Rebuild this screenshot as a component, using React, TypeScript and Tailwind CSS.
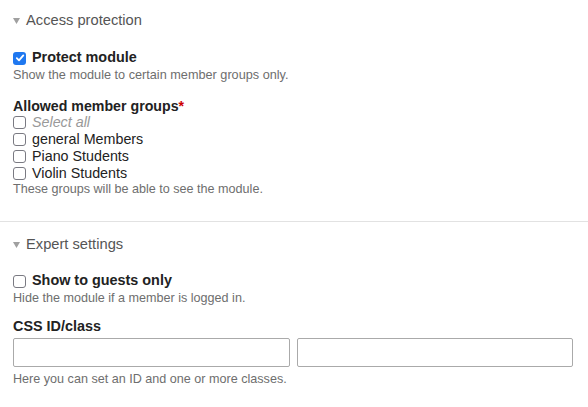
import React from "react";

function Tri() {
  return (
    <svg width="7" height="6" viewBox="0 0 7 6" className="mr-[6px] mt-[1px]">
      <polygon points="0,0 7,0 3.5,6" fill="#a0a0a0" />
    </svg>
  );
}

function Box({ checked }: { checked?: boolean }) {
  if (checked) {
    return (
      <span className="w-[13px] h-[13px] rounded-[3px] bg-[#1f78f0] flex items-center justify-center shrink-0 mr-[6px]">
        <svg width="10" height="10" viewBox="0 0 10 10">
          <polyline points="1.8,5.2 4,7.4 8.3,2.4" fill="none" stroke="#fff" strokeWidth="1.8" strokeLinecap="round" strokeLinejoin="round" />
        </svg>
      </span>
    );
  }
  return <span className="w-[13px] h-[13px] rounded-[3px] border border-[#7a7a82] bg-white shrink-0 mr-[6px]" />;
}

export default function App() {
  return (
    <div className="w-[588px] h-[407px] bg-white text-[#222] overflow-hidden" style={{ fontFamily: '"Liberation Sans", Arial, sans-serif' }}>
      <section className="pt-[10px] px-[13px] border-b border-[#e2e2e2] h-[222px]">
        <div className="h-[20px] flex items-center text-[14.7px] text-[#555]">
          <Tri />
          <span>Access protection</span>
        </div>
        <div className="mt-[19px] h-[18px] flex items-center">
          <Box checked />
          <span className="text-[14.4px] font-bold">Protect module</span>
        </div>
        <div className="h-[16px] leading-[16px] text-[12.7px] text-[#6e6e6e]">Show the module to certain member groups only.</div>
        <div className="mt-[15px] h-[16px] leading-[16px] text-[14.2px] font-bold">
          Allowed member groups<span className="text-[#c00]">*</span>
        </div>
        <div className="flex flex-col">
          {[
            { t: "Select all", sel: true },
            { t: "general Members" },
            { t: "Piano Students" },
            { t: "Violin Students" },
          ].map((o) => (
            <div key={o.t} className="h-[17px] flex items-center">
              <Box />
              <span className={o.sel ? "text-[14.3px] italic text-[#999]" : "text-[14.3px]"}>{o.t}</span>
            </div>
          ))}
        </div>
        <div className="h-[14px] leading-[14px] text-[12.6px] text-[#6e6e6e]">These groups will be able to see the module.</div>
      </section>
      <section className="pt-[12px] px-[13px]">
        <div className="h-[20px] flex items-center text-[14.7px] text-[#555]">
          <Tri />
          <span>Expert settings</span>
        </div>
        <div className="mt-[18px] h-[18px] flex items-center">
          <Box />
          <span className="text-[14.4px] font-bold">Show to guests only</span>
        </div>
        <div className="h-[16px] leading-[16px] text-[12.6px] text-[#6e6e6e]">Hide the module if a member is logged in.</div>
        <div className="mt-[12px] h-[16px] leading-[16px] text-[14.4px] font-bold">CSS ID/class</div>
        <div className="mt-[4px] flex gap-[7px] pr-[2px]">
          <input className="w-[277px] h-[29px] border border-[#aaa] rounded-[2px] outline-none" />
          <input className="w-[277px] h-[29px] border border-[#aaa] rounded-[2px] outline-none" />
        </div>
        <div className="mt-[4px] h-[16px] leading-[16px] text-[12.6px] text-[#6e6e6e]">Here you can set an ID and one or more classes.</div>
      </section>
    </div>
  );
}
